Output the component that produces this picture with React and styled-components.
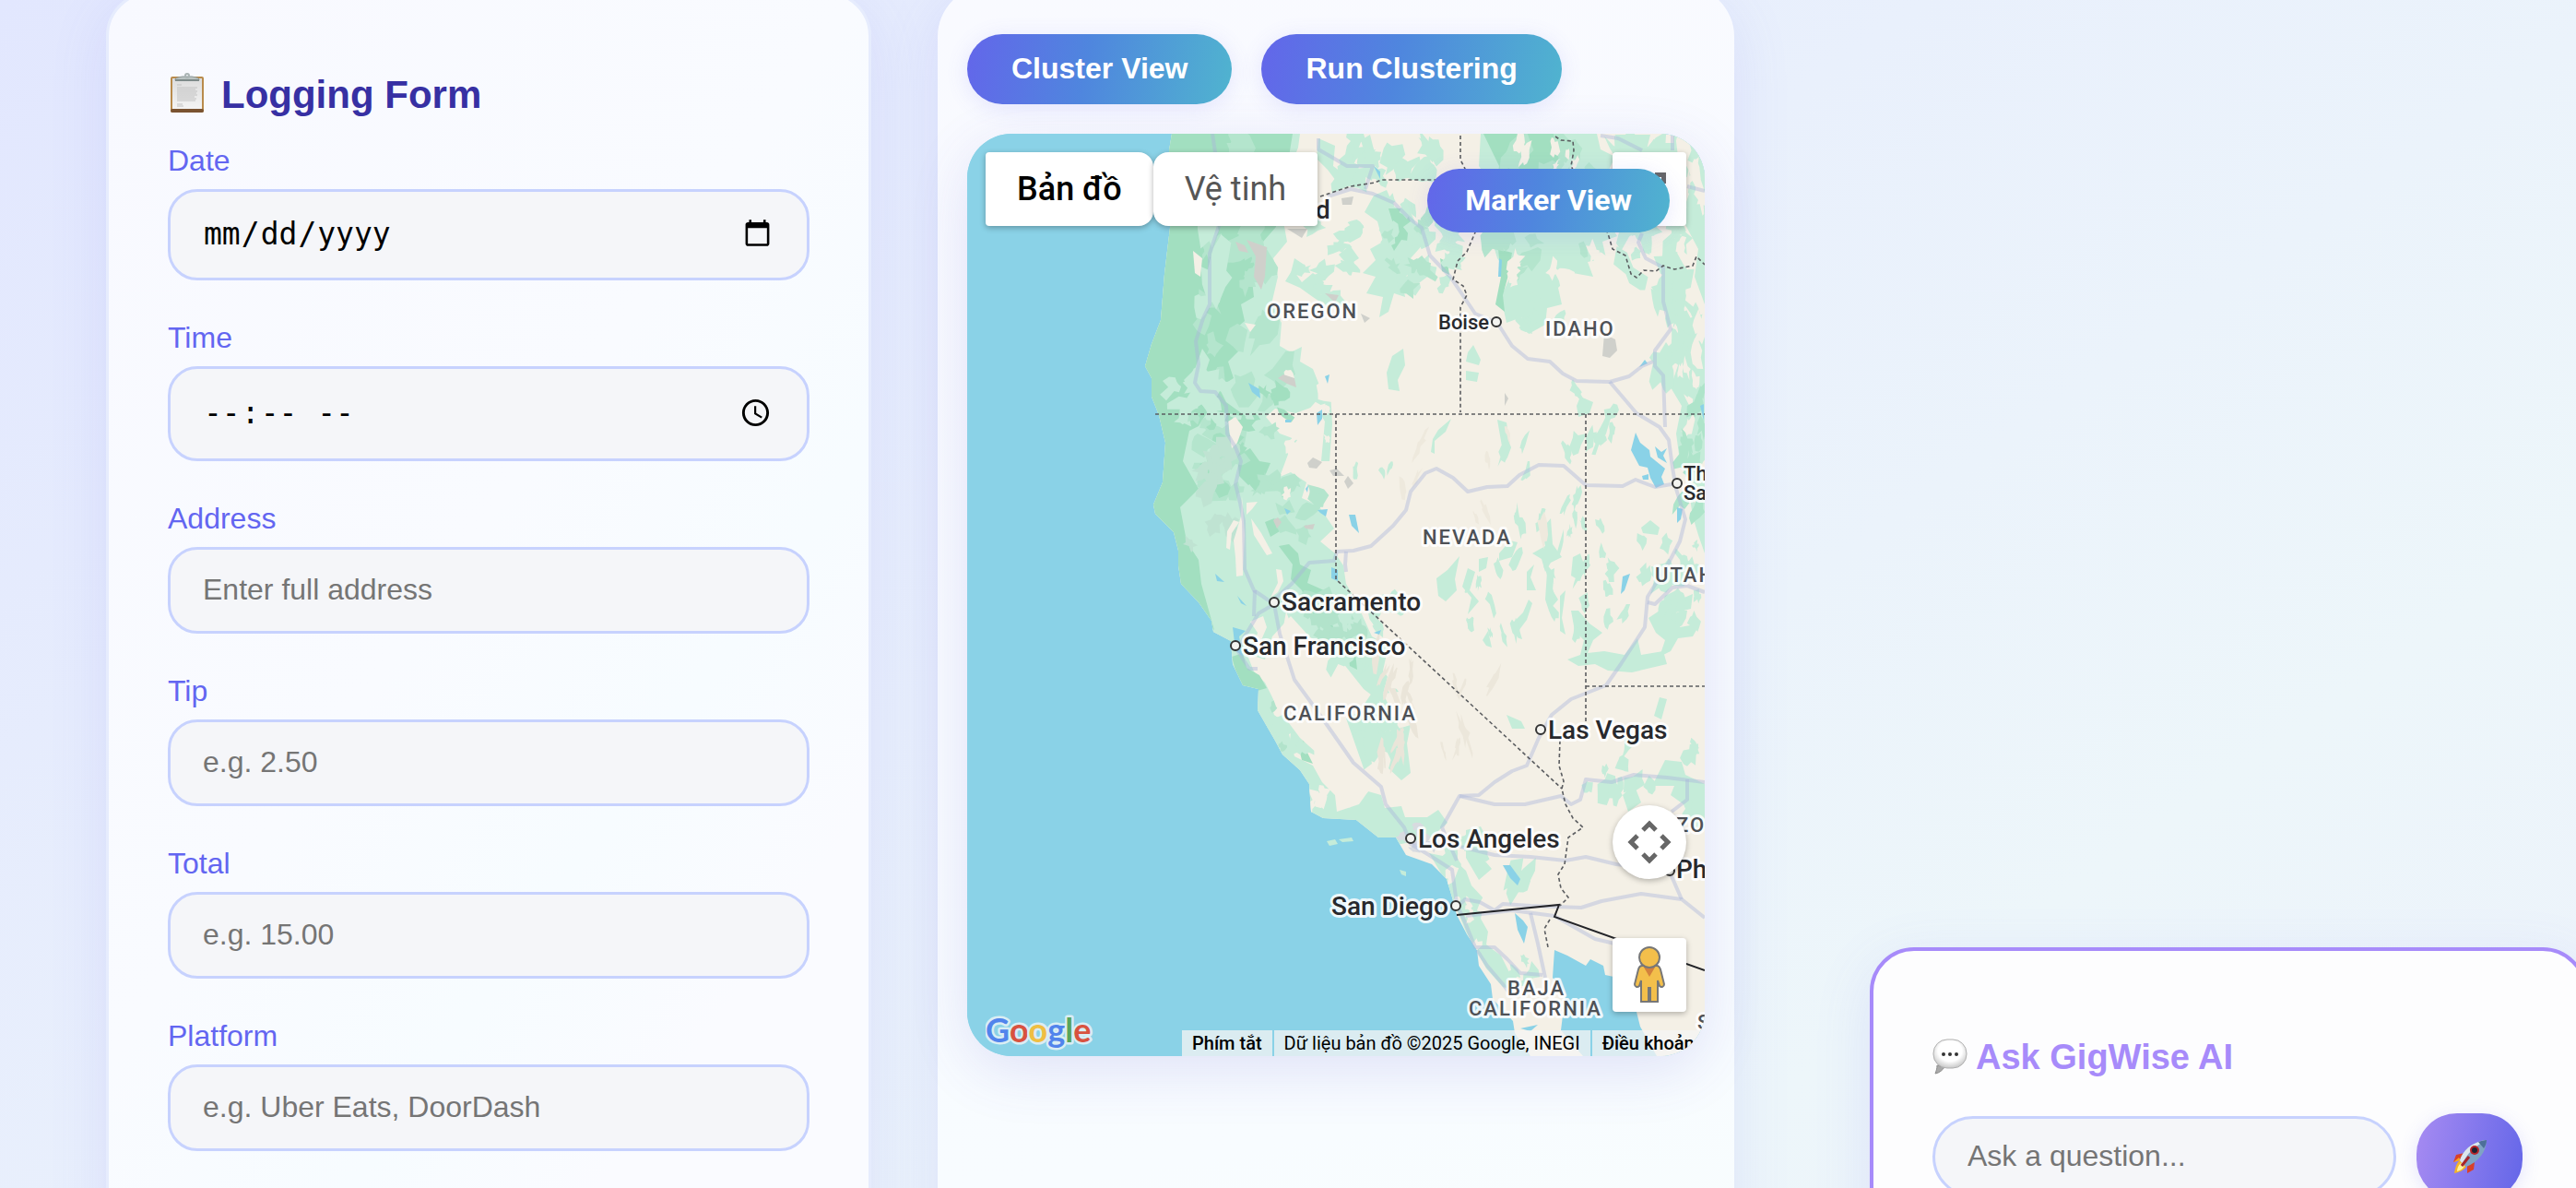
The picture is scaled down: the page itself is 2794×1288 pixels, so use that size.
import React from "react";
import styled, { createGlobalStyle } from "styled-components";

const GlobalStyle = createGlobalStyle`
  * {
    box-sizing: border-box;
  }
  body {
    margin: 0;
    font-family: "Liberation Sans", Arial, sans-serif;
  }
  button,
  input {
    font-family: inherit;
  }
`;

const Page = styled.main`
  display: grid;
  grid-template-columns: minmax(0, 830fr) minmax(0, 864fr) minmax(0, 853fr);
  grid-template-rows: 100vh;
  gap: 72px;
  padding-left: 115px;
  margin-right: -12px;
  background: linear-gradient(145deg, #e2e7fe 0%, #e9f0fc 45%, #edf6fa 78%, #ecf2fb 100%);
`;

const Viewport = styled.div`
  height: 100vh;
  overflow: hidden;
`;

const FormCard = styled.form`
  height: 1400px;
  margin-top: -9px;
  padding: 85px 64px;
  border: 3px solid #e6ecfd;
  border-radius: 48px;
  background: linear-gradient(125deg, #f8f9ff 0%, #f9fbff 45%, #f7fcff 65%, #fafbff 80%);
  box-shadow: 0 16px 64px rgba(99, 102, 241, 0.12);
`;

const FormTitle = styled.h2`
  display: flex;
  align-items: center;
  gap: 13px;
  margin: 0 0 29px;
  color: #3730a3;
  font-size: 42px;
  line-height: 48px;
`;

const Field = styled.div`
  display: flex;
  flex-direction: column;
  margin-bottom: 44px;
`;

const FieldLabel = styled.label`
  margin-bottom: 12px;
  color: #6366f1;
  font-size: 32px;
  line-height: 37px;
`;

const FieldInput = styled.input`
  height: ${({ $height }) => $height || 94}px;
  padding: 0 35px 2px;
  border: 3px solid #c7d2fe;
  border-radius: 32px;
  background: #f5f6f9;
  color: #000;
  font-size: 32px;
  outline: none;

  &[type="date"],
  &[type="time"] {
    font-family: "DejaVu Sans Mono", monospace;
    font-size: 33px;
  }
  &::placeholder {
    color: #757575;
  }
`;

const MapCard = styled.section`
  height: 1400px;
  margin-top: -16px;
  padding: 53px 32px 32px;
  border-radius: 56px;
  background: linear-gradient(170deg, #f9faff 0%, #f8fbff 50%, #f8fcff 85%, #f8fdfd 100%);
  box-shadow: 0 16px 64px rgba(99, 102, 241, 0.12);
`;

const ButtonRow = styled.div`
  display: flex;
  gap: 32px;
  margin-bottom: 32px;
`;

const PillButton = styled.button`
  height: 76px;
  padding: 0 48px 2px;
  border: 0;
  border-radius: 38px;
  background: linear-gradient(100deg, #6366ea 0%, #4f86de 45%, #50b4cf 100%);
  color: #fff;
  font-size: 32px;
  font-weight: 700;
  white-space: nowrap;
  box-shadow: 0 4px 24px rgba(99, 102, 241, 0.14);
`;

const MarkerButton = styled(PillButton)`
  position: absolute;
  top: 38px;
  right: 38px;
  height: 69px;
  padding: 0 41px 2px;
  border-radius: 35px;
`;

const MapFrame = styled.div`
  position: relative;
  height: 1000px;
  overflow: hidden;
  border-radius: 48px;
  background: #8ad2e7;
  font-family: Roboto, sans-serif;
`;

const MapShadow = styled.div`
  border-radius: 48px;
  box-shadow: 0 16px 64px rgba(79, 70, 200, 0.14);
`;

const MapDrawing = styled.svg`
  display: block;
  width: 100%;
  height: 100%;
`;

const MapTypes = styled.div`
  position: absolute;
  top: 20px;
  left: 20px;
  display: flex;
`;

const MapTypeButton = styled.button`
  height: 80px;
  padding: 0 34px;
  border: 0;
  border-radius: ${({ $active }) => ($active ? "4px 16px 16px 4px" : "16px 4px 4px 16px")};
  background: #fff;
  color: ${({ $active }) => ($active ? "#000" : "#565656")};
  font-family: Roboto, sans-serif;
  font-size: 36px;
  font-weight: ${({ $active }) => ($active ? 500 : 400)};
  box-shadow: 0 2px 6px rgba(0, 0, 0, 0.3);
`;

const MapControl = styled.button`
  position: absolute;
  right: 20px;
  display: flex;
  align-items: center;
  justify-content: center;
  width: 80px;
  height: 80px;
  padding: 0;
  border: 0;
  border-radius: ${({ $round }) => ($round ? "50%" : "4px")};
  background: #fff;
  box-shadow: 0 2px 6px rgba(0, 0, 0, 0.28);
`;

const FullscreenControl = styled(MapControl)`
  top: 20px;
`;

const CameraControl = styled(MapControl)`
  bottom: 192px;
`;

const PegmanControl = styled(MapControl)`
  bottom: 48px;
`;

const GoogleLink = styled.a`
  position: absolute;
  bottom: 0;
  left: 20px;
  display: flex;
  text-decoration: none;
`;

const Attribution = styled.div`
  position: absolute;
  bottom: 0;
  left: 233px;
  display: flex;
  gap: 2px;
  height: 28px;
  color: #000;
  font-size: 20px;
  line-height: 28px;
  white-space: nowrap;
`;

const Notice = styled.span`
  padding: 0 11px;
  background: rgba(245, 245, 245, 0.76);
`;

const NoticeButton = styled.button`
  padding: 0 11px;
  border: 0;
  background: rgba(245, 245, 245, 0.76);
  color: #000;
  font-family: Roboto, sans-serif;
  font-size: 20px;
  font-weight: 500;
`;

const TermsLink = styled.a`
  padding: 0 11px;
  background: rgba(245, 245, 245, 0.76);
  color: #000;
  font-weight: 500;
  text-decoration: none;
`;

const ChatCard = styled.section`
  align-self: end;
  height: 360px;
  margin: 0 0 -99px 75px;
  padding: 94px 66px 64px 64px;
  border: 4px solid #a78bfa;
  border-radius: 48px;
  background: #fdfdfe;
  box-shadow: 0 16px 64px rgba(99, 102, 241, 0.12);
`;

const ChatTitle = styled.h3`
  display: flex;
  align-items: center;
  gap: 9px;
  margin: 0 0 39px;
  color: #a78bfa;
  font-size: 38px;
  line-height: 43px;
`;

const ChatRow = styled.form`
  display: flex;
  align-items: center;
  gap: 22px;
`;

const ChatInput = styled(FieldInput)`
  flex: 1;
  min-width: 0;
  height: 88px;
  border-radius: 44px;
`;

const SendButton = styled.button`
  display: flex;
  align-items: center;
  justify-content: center;
  width: 115px;
  height: 94px;
  padding: 0;
  border: 0;
  border-radius: 44px;
  background: linear-gradient(100deg, #a78bf2 0%, #6366e8 100%);
  box-shadow: 0 4px 20px rgba(99, 102, 241, 0.16);
`;

const ClipboardIcon = () => (
  <svg width="45" height="48" viewBox="0 0 45 48" aria-hidden="true">
    <defs>
      <linearGradient id="paper" x1="0" y1="0" x2="0" y2="1">
        <stop offset="0" stopColor="#dcdcdc" />
        <stop offset="1" stopColor="#f4f4f4" />
      </linearGradient>
    </defs>
    <rect x="3" y="4" width="36" height="39" rx="2" fill="#b98b4c" />
    <rect x="3" y="39" width="36" height="4" rx="2" fill="#7a5331" />
    <rect x="5" y="6" width="32" height="33" fill="url(#paper)" />
    <path d="M10 13h5M10 16h22M10 18h20M10 20h22M10 22h21M10 24h22M10 26h19M10 28h21M10 30h20M10 34h6M10 36h7" stroke="#c2c2c2" strokeWidth="1" />
    <path d="M8 8c0-3 3-3 8-4h10c5 1 8 1 8 4z" fill="#b9c2c2" stroke="#8b9797" strokeWidth="1" />
    <rect x="8" y="7" width="26" height="2" fill="#7f8b8a" />
    <circle cx="21" cy="3" r="2" fill="none" stroke="#a9b3b3" strokeWidth="2" />
  </svg>
);

const SpeechIcon = () => (
  <svg width="38" height="42" viewBox="0 0 38 42" aria-hidden="true">
    <defs>
      <radialGradient id="bubble" cx="0.5" cy="0.4" r="0.6">
        <stop offset="0.6" stopColor="#ffffff" />
        <stop offset="1" stopColor="#c9c9c9" />
      </radialGradient>
    </defs>
    <path d="M5 29c0 4-1 6-2 9 5-1 8-4 10-7z" fill="#a9a9a9" stroke="#8d8d8d" strokeWidth="1" />
    <rect x="1" y="1" width="36" height="31" rx="15" fill="url(#bubble)" stroke="#b0b0b0" strokeWidth="1" />
    <circle cx="12" cy="17" r="2" fill="#333" />
    <circle cx="19" cy="17" r="2" fill="#333" />
    <circle cx="26" cy="17" r="2" fill="#333" />
  </svg>
);

const RocketIcon = () => (
  <svg width="38" height="38" viewBox="0 0 38 38" aria-hidden="true">
    <path d="M13 15L4 17 1 25l8-3z" fill="#d8402a" />
    <path d="M24 25l-1 8-7 4 0-9z" fill="#d8402a" />
    <path d="M1 25l6-5 2 3z" fill="#f6a623" />
    <path d="M8 23c-4 3-5 9-6 14 5-1 10-3 13-7z" fill="#f3b428" />
    <path d="M9 26c-3 3-4 6-4 9 4-1 7-3 8-6z" fill="#fff3a0" />
    <path d="M8 23c3-10 12-20 29-22 0 12-9 24-22 29z" fill="#7fa3c4" />
    <path d="M8 23C11 13 20 3 37 1 24 8 15 16 11 27z" fill="#dce6ee" />
    <path d="M37 1c-3 0-6 1-9 2l6 7c2-3 3-6 3-9z" fill="#4d6f99" />
    <circle cx="24" cy="12" r="5" fill="#b8252a" />
    <circle cx="24" cy="12" r="3" fill="#1d2333" />
    <path d="M18 19l-8 10" stroke="#a8242a" strokeWidth="3" />
  </svg>
);

const CameraIcon = () => (
  <svg width="48" height="48" viewBox="0 0 48 48" fill="none" stroke="#666" strokeWidth="5" aria-hidden="true">
    <path d="M17 11l7-7 7 7M17 37l7 7 7-7M11 17l-7 7 7 7M37 17l7 7-7 7" />
  </svg>
);

const FullscreenIcon = () => (
  <svg width="36" height="36" viewBox="0 0 36 36" fill="none" stroke="#666" strokeWidth="5" aria-hidden="true">
    <path d="M2.500 12V2.500H12M24 2.500h9.500V12M33.500 24v9.500H24M12 33.500H2.500V24" />
  </svg>
);

const PegmanIcon = () => (
  <svg width="36" height="62" viewBox="0 0 36 62" stroke="#777" strokeWidth="2" aria-hidden="true">
    <path
      d="M10 21h16c2 0 3 1 4 4l4 16c0 3-3 4-5 2l-2-6v23h-8V45h-2v15H9V37l-2 6c-2 2-5 1-5-2l4-16c1-3 2-4 4-4z"
      fill="#f3bf4b"
    />
    <path d="M11 21h14l-7 12z" fill="#d3813d" stroke="none" />
    <circle cx="18" cy="12" r="11" fill="#f3bf4b" />
  </svg>
);

const GoogleLogo = () => (
  <svg width="120" height="50" viewBox="0 0 120 50" role="img" aria-label="Google">
    <text
      x="0"
      y="35"
      fontFamily="Lato, sans-serif"
      fontSize="36"
      fontWeight="700"
      stroke="#d9edf4"
      strokeWidth="5"
      strokeLinejoin="round"
      paintOrder="stroke"
    >
      <tspan fill="#5184ec">G</tspan>
      <tspan fill="#d8523f">o</tspan>
      <tspan fill="#efbe42">o</tspan>
      <tspan fill="#5184ec">g</tspan>
      <tspan fill="#58a55c">l</tspan>
      <tspan fill="#d8523f">e</tspan>
    </text>
  </svg>
);

const LAND =
  "1271,145 1268,163 1271,200 1269,247 1263,297 1259,347 1249,373 1242,397 1249,410 1249,430 1257,450 1264,480 1261,523 1251,547 1253,557 1273,577 1278,597 1278,613 1281,633 1300,653 1314,673 1316,685 1335,695 1337,720 1348,743 1365,747 1364,770 1383,803 1391,818 1410,835 1420,850 1422,880 1435,887 1471,889 1495,908 1514,908 1525,927 1553,937 1569,953 1575,973 1580,992 1591,1013 1602,1030 1604,1047 1617,1067 1619,1083 1641,1107 1643,1120 1660,1145 1717,1145 1693,1117 1698,1077 1684,1060 1686,1030 1700,1036 1720,1047 1725,1040 1739,1047 1741,1057 1755,1060 1775,1097 1779,1113 1797,1145 1849,1145 1849,145";

const LIGHT_GREEN = [
  "1230,145 1410,145 1408,160 1398,185 1403,210 1392,240 1396,262 1381,280 1386,300 1379,330 1390,350 1388,375 1400,382 1412,376 1410,392 1424,400 1432,420 1443,423 1445,460 1442,500 1433,500 1437,457 1427,440 1405,448 1383,443 1373,452 1388,470 1407,477 1398,490 1388,517 1400,512 1417,523 1412,540 1430,548 1447,573 1432,587 1448,600 1457,613 1460,633 1470,650 1478,668 1488,690 1506,700 1500,727 1517,750 1500,752 1510,772 1496,760 1479,747 1452,713 1420,690 1400,668 1380,690 1372,715 1340,705 1316,688 1230,600",
  "1335,700 1352,708 1360,728 1372,740 1384,764 1378,780 1398,796 1404,820 1424,830 1434,848 1448,862 1450,880 1474,872 1484,858 1498,862 1502,876 1520,874 1524,886 1548,886 1560,878 1570,892 1552,908 1520,915 1480,912 1410,895 1380,830 1330,760",
  "1458,780 1474,772 1490,787 1484,806 1488,828 1472,840 1466,820 1478,808 1462,796",
  "1506,793 1530,786 1526,806 1530,838 1520,846 1506,833 1512,812",
  "1550,925 1575,930 1590,944 1596,960 1610,975 1606,996 1614,1010 1612,1024 1628,1036 1640,1060 1646,1074 1630,1070 1612,1050 1590,1010 1565,950",
  "1590,900 1606,896 1616,916 1606,928 1618,942 1604,954 1590,930",
  "1606,145 1732,145 1736,162 1752,170 1742,190 1752,212 1742,236 1754,256 1738,262 1742,280 1722,284 1728,300 1706,296 1690,312 1694,330 1678,334 1676,352 1658,362 1650,344 1634,350 1628,322 1638,300 1624,280 1612,240 1618,200 1604,180",
  "1752,146 1790,146 1784,170 1800,190 1790,210 1806,230 1796,244 1780,226 1770,200 1758,190",
  "1815,145 1849,145 1849,330 1838,300 1842,270 1826,240 1830,220 1816,200",
  "1820,360 1832,345 1849,340 1849,600 1842,580 1836,560 1830,520 1822,500 1818,470 1824,440 1812,420 1820,396 1810,380",
  "1490,212 1504,206 1512,224 1530,230 1538,248 1546,262 1530,280 1534,296 1520,300 1524,322 1512,318 1506,338 1496,344 1500,322 1482,318 1492,300 1478,296 1492,282 1486,270 1500,262 1494,240 1480,230",
  "1394,305 1402,292 1412,306 1424,296 1436,306 1432,320 1450,316 1462,330 1450,334 1436,330 1424,322 1410,312",
  "1404,280 1416,288 1412,300 1400,296",
  "1452,276 1464,266 1474,280 1462,288",
  "1430,150 1448,158 1446,180 1462,192 1452,200 1440,184 1428,172",
  "1476,152 1486,146 1492,170 1488,196 1478,190 1482,172",
  "1510,386 1522,378 1524,396 1516,412 1518,424 1506,422 1504,404",
  "1592,382 1598,374 1606,390 1604,396 1590,392",
  "1590,402 1604,404 1602,414 1590,412",
  "1710,440 1714,430 1728,436 1724,448 1712,452",
  "1732,470 1740,456 1748,450 1742,470 1736,484",
  "1624,455 1634,458 1638,484 1632,502 1628,478",
  "1554,476 1560,466 1574,454 1568,468 1556,478 1556,492 1552,490",
  "1558,627 1570,618 1583,603 1578,628 1580,640 1568,652 1560,646",
  "1592,616 1600,620 1594,640 1604,652 1592,666 1596,648 1586,636",
  "1604,606 1614,604 1612,616 1604,620",
  "1626,600 1638,586 1646,588 1640,604 1626,608",
  "1662,600 1676,592 1672,574 1682,562 1684,590 1694,604 1682,610 1676,620 1672,606",
  "1640,676 1652,664 1658,650 1662,654 1656,672 1644,688",
  "1656,620 1664,612 1660,626 1666,640 1656,640",
  "1678,620 1686,616 1684,640 1690,650 1680,662 1676,650",
  "1692,646 1698,640 1694,670 1698,688 1692,684",
  "1706,604 1714,600 1718,612 1714,630 1704,624",
  "1704,662 1712,662 1724,676 1738,686 1728,694 1722,708 1740,706 1762,710 1776,692 1780,710 1804,706 1808,720 1770,729 1744,727 1730,720 1712,722 1700,715 1714,710 1718,694 1708,684",
  "1608,694 1614,684 1618,702 1612,700",
  "1788,670 1800,662 1806,646 1818,640 1822,650 1836,644 1834,660 1818,664 1822,680 1844,676 1836,690 1820,692 1812,706 1800,712 1806,694 1796,686",
  "1780,572 1790,564 1800,572 1798,580 1782,578",
  "1806,824 1824,826 1828,840 1849,850 1849,900 1836,896 1826,872 1812,862 1816,852 1792,852",
  "1760,862 1772,850 1780,870 1766,880",
  "1634,775 1650,782 1654,790 1640,790",
  "1800,756 1808,758 1802,780 1794,776",
];

const DARK_GREEN = [
  "1230,145 1402,145 1398,170 1386,184 1396,206 1380,226 1384,246 1370,262 1372,290 1358,304 1360,322 1346,330 1350,348 1336,360 1344,380 1332,392 1338,410 1322,420 1330,436 1352,452 1320,446 1302,420 1312,390 1304,378 1296,400 1284,412 1296,430 1310,446 1300,462 1290,467 1283,500 1300,530 1280,550 1287,587 1300,607 1303,633 1317,683 1290,660 1230,560",
  "1609,145 1694,145 1704,166 1690,172 1688,186 1672,184 1668,204 1656,196 1652,214 1640,210 1632,226 1622,206 1626,180",
  "1336,712 1348,708 1352,724 1366,732 1374,746 1360,750 1345,745",
  "1387,592 1398,590 1408,600 1410,612 1422,618 1418,632 1436,640 1424,650 1440,664 1450,690 1436,680 1420,660 1412,640 1400,628 1402,612",
  "1506,226 1524,226 1530,240 1522,246 1534,262 1520,260 1512,272 1504,256 1512,246",
  "1625,270 1640,274 1636,298 1630,320 1632,338 1622,330 1628,300",
  "1342,494 1356,486 1366,500 1378,502 1372,516 1354,526 1344,516",
  "1372,566 1382,562 1388,576 1378,582",
  "1463,714 1470,708 1472,726 1464,722",
  "1376,774 1382,778 1386,796 1378,790",
  "1408,808 1416,812 1424,828 1412,824",
  "1562,280 1570,284 1572,298 1564,294",
];

const SAND = [
  "1332,457 1340,452 1348,463 1342,480 1336,486 1334,472",
  "1338,586 1346,560 1347,538 1350,580 1348,624 1341,625 1340,604",
  "1357,562 1368,578 1380,600 1374,602 1360,580",
  "1384,617 1390,618 1392,630 1386,642 1378,648 1386,632",
  "1352,545 1364,544 1358,552 1352,558",
  "1331,576 1338,564 1344,566 1336,578 1334,596 1330,594",
  "1356,674 1370,668 1374,680 1368,694 1376,704 1366,712 1360,700 1364,686",
  "1395,663 1403,685 1414,698 1430,720 1442,740 1454,762 1464,790 1478,830 1486,856 1474,868 1458,850 1440,840 1430,818 1410,800 1398,784 1384,766 1376,744 1370,720 1382,730 1396,750 1392,726 1384,700 1390,690",
  "1294,272 1304,280 1302,300 1296,296",
  "1350,350 1362,352 1356,360",
  "1418,855 1430,858 1436,872 1424,868",
];

const WATER = [
  "1774,469 1779,480 1789,488 1790,495 1806,508 1802,517 1805,525 1796,529 1790,518 1787,507 1778,505 1769,488",
  "1795,484 1802,490 1808,486 1804,494 1808,502 1798,496",
  "1781,516 1788,514 1788,520 1782,520",
  "1819,550 1825,552 1823,563 1819,567",
  "1444,615 1451,618 1451,630 1444,627",
  "1463,558 1470,558 1474,578 1466,570",
  "1429,553 1440,552 1438,560 1432,556",
  "1337,680 1351,684 1344,690 1348,712 1340,705",
  "1318,622 1328,631 1320,630",
  "1342,646 1352,657 1346,654",
  "1354,415 1366,422 1367,432 1358,425",
  "1428,448 1434,444 1434,454 1429,461",
  "1437,408 1442,406 1440,416",
  "1394,455 1401,455 1400,458 1394,458",
  "1416,530 1419,526 1418,534",
  "1393,551 1400,554 1396,558",
  "1626,280 1629,282 1628,300 1625,300",
  "1784,390 1787,394 1778,398",
  "1844,440 1848,438 1848,456",
  "1630,938 1638,938 1649,953 1646,960 1638,952",
  "1643,990 1652,998 1657,1005 1653,1023 1646,1008",
  "1760,625 1768,622 1762,640 1758,644",
  "1649,1115 1668,1111 1660,1118",
  "1490,180 1497,186 1497,194",
  "1490,686 1498,683 1496,688",
];

const ROADS = [
  "1315,145 1318,165 1322,245 1312,275 1312,330 1305,345 1297,370 1300,395 1296,415 1302,424 1318,425 1330,440 1331,470 1340,485 1346,500 1340,525 1345,545 1349,565 1350,617 1360,640 1382,655 1388,687 1404,737 1426,767 1447,797 1468,827 1498,853 1503,872 1523,897 1530,915 1550,927 1575,943 1580,980 1589,1000 1600,1027 1621,1027 1635,1040 1649,1055 1673,1057",
  "1382,655 1365,665 1350,690 1342,705 1355,725 1364,725",
  "1361,640 1360,668",
  "1382,650 1401,633 1420,610 1447,608 1450,598 1468,597 1487,592 1511,570 1525,553 1530,533 1546,513 1558,508 1576,518 1592,533 1613,528 1635,527 1648,515 1669,504 1696,505 1720,526 1760,527 1774,520 1795,528 1819,524",
  "1430,150 1430,162 1461,180 1489,180 1481,205",
  "1440,213 1465,205 1489,210 1512,220 1530,238 1542,247 1551,277 1573,300 1600,340 1624,350 1640,375 1657,389 1681,392 1695,405 1710,413 1746,414 1767,408 1781,397 1793,392",
  "1746,414 1775,448 1800,463 1810,477 1814,507 1818,530 1828,563 1822,587 1810,610 1787,647 1784,680 1758,720 1742,743 1704,758 1683,775 1669,800 1656,830 1640,836 1621,848 1604,862 1583,863 1564,897 1580,933",
  "1781,253 1777,263 1785,280 1804,290 1804,327 1812,357 1795,380 1795,397 1804,407 1806,463",
  "1736,147 1755,150 1781,163",
  "1814,147 1814,163",
  "1830,202 1849,207",
  "1583,863 1621,872 1654,872 1693,863 1704,872 1714,867 1720,845 1748,848 1772,840 1808,843 1849,848",
  "1528,913 1580,917 1621,927 1660,929 1698,933 1720,929 1753,937 1808,943 1813,950 1824,975",
  "1582,982 1589,975 1605,978 1621,987 1630,980 1660,982 1715,984 1737,977 1780,969 1824,975 1849,995",
  "1830,845 1830,867 1813,880",
  "1660,990 1668,1023 1676,1060",
  "1602,1030 1613,1047 1630,1067 1640,1080",
  "1590,993 1640,987 1686,993 1730,1018 1760,1025",
  "1787,653 1795,655 1814,637 1830,635 1849,642",
  "1460,598 1459,612 1460,620",
];

const STATE_LINES = [
  "1253,449 1849,449",
  "1584,147 1584,173 1589,183 1600,252 1591,273 1581,283 1576,303 1587,310 1591,320 1584,333 1584,447",
  "1432,213 1465,202 1491,198 1498,195 1590,195",
  "1687,148 1693,152 1706,153 1707,163 1704,180 1744,253 1749,270 1763,277 1769,297 1775,301 1783,293 1796,294 1804,288 1816,292 1836,288 1840,278 1849,287",
  "1449,449 1449,628 1694,855",
  "1720,449 1720,783",
  "1720,744 1849,744",
  "1692,803 1691,830 1696,847 1694,855 1698,872 1706,887 1717,897 1701,908 1697,937 1690,948 1693,963 1701,973 1692,982",
  "1681,997 1675,1007 1679,1027",
];

// [x, y, width, height, count, size, tall, fill]
const PATCHES = [
  [1300, 150, 90, 290, 26, 14, 1.3, "#b4e5cd"],
  [1300, 220, 24, 120, 4, 12, 2.4, "#c5ecd9"],
  [1270, 400, 60, 60, 8, 14, 1.1, "#c5ecd9"],
  [1290, 450, 90, 90, 20, 14, 0.9, "#b4e5cd"],
  [1380, 520, 50, 60, 8, 12, 1, "#b4e5cd"],
  [1300, 450, 70, 80, 12, 9, 1, "#a2dfc0"],
  [1290, 460, 50, 130, 10, 12, 1.2, "#bfe3d2"],
  [1360, 420, 40, 40, 6, 9, 1, "#a2dfc0"],
  [1390, 400, 50, 110, 10, 8, 1.2, "#f4f0e6"],
  [1395, 460, 40, 80, 8, 8, 1.2, "#f4f0e6"],
  [1410, 640, 70, 70, 10, 13, 1.1, "#b2e3cb"],
  [1440, 690, 70, 60, 4, 8, 1.2, "#f4f0e6"],
  [1450, 640, 70, 45, 8, 7, 1.3, "#c5ecd9"],
  [1440, 710, 70, 100, 12, 12, 1.6, "#c5ecd9"],
  [1372, 740, 50, 90, 10, 10, 1.6, "#c5ecd9"],
  [1450, 150, 130, 50, 16, 12, 1.3, "#c5ecd9"],
  [1410, 230, 80, 100, 12, 10, 0.8, "#c5ecd9"],
  [1500, 200, 80, 110, 20, 12, 1.1, "#c5ecd9"],
  [1500, 230, 50, 90, 8, 10, 1.1, "#b4e5cd"],
  [1616, 150, 110, 160, 24, 13, 1.2, "#b4e5cd"],
  [1640, 250, 100, 80, 10, 8, 1.6, "#f4f0e6"],
  [1640, 150, 100, 90, 10, 5, 2.4, "#f4f0e6"],
  [1650, 320, 60, 50, 6, 8, 1.2, "#c5ecd9"],
  [1755, 160, 85, 150, 26, 13, 1.6, "#c5ecd9"],
  [1822, 150, 24, 120, 8, 7, 2.4, "#f4f0e6"],
  [1800, 310, 44, 130, 14, 10, 1.8, "#c5ecd9"],
  [1822, 340, 27, 230, 12, 5, 2.6, "#f4f0e6"],
  [1820, 400, 29, 160, 10, 8, 1.8, "#aee4ca"],
  [1690, 420, 70, 60, 6, 7, 1.8, "#c5ecd9"],
  [1540, 450, 170, 70, 5, 4, 3, "#c5ecd9"],
  [1640, 530, 80, 80, 12, 4, 3.4, "#c5ecd9"],
  [1590, 610, 130, 80, 16, 4, 3, "#c5ecd9"],
  [1730, 560, 110, 120, 12, 6, 1.8, "#c5ecd9"],
  [1800, 580, 45, 120, 10, 9, 1.6, "#c5ecd9"],
  [1490, 700, 50, 130, 14, 4, 5, "#eae5d9"],
  [1560, 740, 60, 80, 6, 4, 4.5, "#ece7db"],
  [1500, 470, 200, 140, 8, 4, 4, "#eee9dd"],
  [1376, 760, 60, 100, 8, 7, 1.3, "#b2e3cb"],
  [1420, 845, 60, 40, 8, 6, 1.2, "#f4f0e6"],
  [1516, 895, 60, 34, 10, 6, 0.9, "#d8dbe0"],
  [1575, 900, 40, 40, 5, 9, 1.4, "#c5ecd9"],
  [1570, 940, 50, 90, 8, 6, 1.8, "#f4f0e6"],
  [1640, 950, 18, 34, 3, 9, 2, "#c5ecd9"],
  [1634, 1036, 30, 40, 5, 7, 1.4, "#c5ecd9"],
  [1720, 800, 120, 90, 12, 8, 1.6, "#c5ecd9"],
  [1452, 450, 60, 80, 3, 4, 2.4, "#c5ecd9"],
];

const ROCKS = [
  "1352,260 1374,268 1372,300 1368,314 1360,300 1362,278",
  "1340,262 1350,266 1354,274 1344,272",
  "1396,248 1418,248 1412,258",
  "1386,410 1392,406 1404,410 1406,420 1396,416",
  "1418,502 1424,496 1434,501 1428,508 1420,507",
  "1442,510 1450,508 1458,516 1446,516",
  "1462,516 1468,524 1462,530 1458,522",
  "1740,362 1752,368 1754,380 1746,388 1738,386",
  "1632,426 1636,432 1632,440",
  "1437,318 1452,320 1448,328",
  "1476,340 1486,345 1480,350",
  "1381,564 1386,561 1390,566 1385,573",
  "1414,570 1426,568 1424,574 1416,573",
  "1455,215 1468,213 1466,222 1456,222",
];

const CITIES = [
  { name: "d", x: 1427, y: 237 },
  { name: "Boise", x: 1560, y: 357, dot: [1623, 349], size: 22 },
  { name: "Th", x: 1826, y: 521, dot: [1819, 524], size: 22 },
  { name: "Sa", x: 1826, y: 542, size: 22 },
  { name: "Sacramento", x: 1390, y: 662, dot: [1382, 653] },
  { name: "San Francisco", x: 1348, y: 710, dot: [1340, 700] },
  { name: "Las Vegas", x: 1679, y: 801, dot: [1671, 791] },
  { name: "Los Angeles", x: 1538, y: 919, dot: [1530, 909] },
  { name: "San Diego", x: 1444, y: 992, dot: [1579, 982] },
  { name: "Ph", x: 1818, y: 952, dot: [1811, 944] },
];

const STATES = [
  { name: "OREGON", x: 1374, y: 345 },
  { name: "IDAHO", x: 1676, y: 364 },
  { name: "NEVADA", x: 1543, y: 590 },
  { name: "UTAH", x: 1795, y: 631 },
  { name: "CALIFORNIA", x: 1392, y: 781 },
  { name: "BAJA", x: 1635, y: 1079 },
  { name: "CALIFORNIA", x: 1593, y: 1101 },
  { name: "ZO", x: 1818, y: 902 },
  { name: "S", x: 1841, y: 1116 },
];

// small seeded generator so the terrain is the same on every render
const createRandom = (seed) => () => {
  seed = (seed * 16807) % 2147483647;
  return seed / 2147483647;
};

const makePatches = () => {
  const random = createRandom(4217);
  return PATCHES.flatMap(([x, y, width, height, count, size, tall, fill]) =>
    Array.from({ length: count }, () => {
      const cx = x + random() * width;
      const cy = y + random() * height;
      const radius = size * (0.6 + random() * 0.8);
      const corners = 8 + Math.floor(random() * 8);
      const lean = (random() - 0.5) * 0.9;
      const points = Array.from({ length: corners }, (_, i) => {
        const angle = ((i + random() * 0.6) / corners) * Math.PI * 2;
        const reach = radius * (0.35 + random() * 0.85);
        const dy = Math.sin(angle) * reach * tall;
        const px = cx + Math.cos(angle) * reach - dy * lean;
        return `${px.toFixed(1)},${(cy + dy).toFixed(1)}`;
      });
      return { points: points.join(" "), fill };
    })
  );
};

const terrain = makePatches();

const WestCoastMap = () => (
  <MapDrawing viewBox="1049 145 800 1000" preserveAspectRatio="xMidYMid slice" role="img" aria-label="Map">
    <defs>
      <clipPath id="land">
        <polygon points={LAND} />
      </clipPath>
    </defs>
    <rect x="1049" y="145" width="800" height="1000" fill="#8ad2e7" />
    <polygon points={LAND} fill="#f4f0e6" />
    <g clipPath="url(#land)">
      {LIGHT_GREEN.map((points) => (
        <polygon key={points} points={points} fill="#c5ecd9" />
      ))}
      {DARK_GREEN.map((points) => (
        <polygon key={points} points={points} fill="#a2dfc0" />
      ))}
      {terrain.map(({ points, fill }) => (
        <polygon key={points} points={points} fill={fill} />
      ))}
      {SAND.map((points) => (
        <polygon key={points} points={points} fill="#f4f0e6" />
      ))}
      {ROCKS.map((points) => (
        <polygon key={points} points={points} fill="#cfd0cb" />
      ))}
    </g>
    <g fill="#c5ecd9">
      <polygon points="1439,912 1448,910 1451,915 1442,917" />
      <polygon points="1452,910 1466,908 1468,912 1456,913" />
      <polygon points="1518,943 1525,945 1525,950 1520,948" />
    </g>
    {WATER.map((points) => (
      <polygon key={points} points={points} fill="#8ad2e7" />
    ))}
    <g fill="none" stroke="#a9b4dc" strokeOpacity="0.42" strokeWidth="4" strokeLinejoin="round">
      {ROADS.map((points) => (
        <polyline key={points} points={points} />
      ))}
    </g>
    <g fill="none" stroke="#5b5d60" strokeWidth="1.6" strokeDasharray="4 3">
      {STATE_LINES.map((points) => (
        <polyline key={points} points={points} />
      ))}
    </g>
    <polyline points="1580,992 1691,981 1686,994 1849,1052" fill="none" stroke="#232428" strokeWidth="2" />
    <g
      fontFamily="Roboto, sans-serif"
      fontWeight="500"
      stroke="#fff"
      strokeOpacity="0.85"
      strokeWidth="6"
      strokeLinejoin="round"
      paintOrder="stroke"
    >
      <g fill="#4e5156" fontSize="22" letterSpacing="2">
        {STATES.map(({ name, x, y }) => (
          <text key={`${name}${y}`} x={x} y={y}>
            {name}
          </text>
        ))}
      </g>
      <g fill="#28292d">
        {CITIES.map(({ name, x, y, size = 28 }) => (
          <text key={name} x={x} y={y} fontSize={size}>
            {name}
          </text>
        ))}
      </g>
    </g>
    <g fill="#f4f4f0" stroke="#333" strokeWidth="2">
      {CITIES.filter(({ dot }) => dot).map(({ name, dot }) => (
        <circle key={name} cx={dot[0]} cy={dot[1]} r="5" />
      ))}
    </g>
  </MapDrawing>
);

const FIELDS = [
  { id: "date", label: "Date", type: "date", height: 99 },
  { id: "time", label: "Time", type: "time", height: 103 },
  { id: "address", label: "Address", type: "text", placeholder: "Enter full address" },
  { id: "tip", label: "Tip", type: "text", placeholder: "e.g. 2.50" },
  { id: "total", label: "Total", type: "text", placeholder: "e.g. 15.00" },
  { id: "platform", label: "Platform", type: "text", placeholder: "e.g. Uber Eats, DoorDash" },
];

const LoggingForm = () => (
  <FormCard>
    <FormTitle>
      <ClipboardIcon />
      Logging Form
    </FormTitle>
    {FIELDS.map(({ id, label, type, placeholder, height }) => (
      <Field key={id}>
        <FieldLabel htmlFor={id}>{label}</FieldLabel>
        <FieldInput id={id} type={type} placeholder={placeholder} $height={height} />
      </Field>
    ))}
  </FormCard>
);

const MapPanel = () => (
  <MapCard>
    <ButtonRow>
      <PillButton type="button">Cluster View</PillButton>
      <PillButton type="button">Run Clustering</PillButton>
    </ButtonRow>
    <MapShadow>
      <MapFrame>
        <WestCoastMap />
        <MapTypes>
          <MapTypeButton type="button" $active>
            Bản đồ
          </MapTypeButton>
          <MapTypeButton type="button">Vệ tinh</MapTypeButton>
        </MapTypes>
        <FullscreenControl type="button" aria-label="Fullscreen">
          <FullscreenIcon />
        </FullscreenControl>
        <CameraControl type="button" aria-label="Camera" $round>
          <CameraIcon />
        </CameraControl>
        <PegmanControl type="button" aria-label="Street View">
          <PegmanIcon />
        </PegmanControl>
        <GoogleLink href="#google">
          <GoogleLogo />
        </GoogleLink>
        <Attribution>
          <NoticeButton type="button">Phím tắt</NoticeButton>
          <Notice>Dữ liệu bản đồ ©2025 Google, INEGI</Notice>
          <TermsLink href="#terms">Điều khoản</TermsLink>
        </Attribution>
        <MarkerButton type="button">Marker View</MarkerButton>
      </MapFrame>
    </MapShadow>
  </MapCard>
);

const AskPanel = () => (
  <ChatCard>
    <ChatTitle>
      <SpeechIcon />
      Ask GigWise AI
    </ChatTitle>
    <ChatRow>
      <ChatInput type="text" placeholder="Ask a question..." aria-label="Ask a question" />
      <SendButton type="button" aria-label="Send">
        <RocketIcon />
      </SendButton>
    </ChatRow>
  </ChatCard>
);

const App = () => (
  <Viewport>
    <GlobalStyle />
    <Page>
      <LoggingForm />
      <MapPanel />
      <AskPanel />
    </Page>
  </Viewport>
);

export default App;
